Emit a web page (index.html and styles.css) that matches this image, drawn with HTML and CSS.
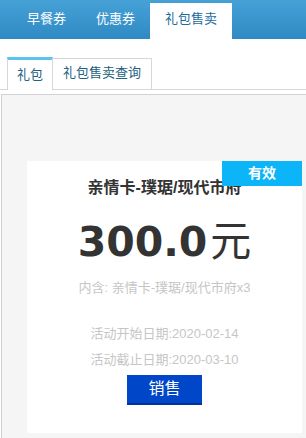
FILE: index.html
```html
<!DOCTYPE html>
<html lang="zh-CN">
<head>
<meta charset="utf-8">
<title>礼包售卖</title>
<link rel="stylesheet" href="styles.css">
</head>
<body>
<div class="topbar">
  <div class="toptab">早餐券</div>
  <div class="toptab">优惠券</div>
  <div class="toptab active">礼包售卖</div>
</div>
<div class="subtabs">
  <div class="subtab active">礼包</div>
  <div class="subtab">礼包售卖查询</div>
</div>
<div class="panel">
  <div class="card">
    <div class="badge">有效</div>
    <div class="title">亲情卡-璞琚/现代市府</div>
    <div class="price"><span class="num">300.0</span><span class="unit">元</span></div>
    <div class="contains">内含: 亲情卡-璞琚/现代市府x3</div>
    <div class="date first">活动开始日期:2020-02-14</div>
    <div class="date">活动截止日期:2020-03-10</div>
    <div class="btn">销售</div>
  </div>
</div>
</body>
</html>
```
FILE: styles.css
```css
* { box-sizing: border-box; }
html, body { margin: 0; padding: 0; }
body {
  width: 306px;
  height: 438px;
  overflow: hidden;
  background: #fff;
  font-family: "Liberation Sans", "Noto Sans CJK SC", sans-serif;
  font-size: 13px;
}
.topbar {
  height: 39px;
  display: flex;
  align-items: flex-end;
  padding-left: 12px;
  background: linear-gradient(#46a1d6, #2f8ac4);
}
.toptab {
  height: 36px;
  line-height: 32px;
  padding: 0 15px;
  color: #fff;
  font-size: 13px;
}
.toptab.active {
  background: #fff;
  color: #1b6b9c;
  padding: 0 15px;
}
.subtabs {
  margin-top: 18px;
  height: 33px;
  display: flex;
  align-items: flex-end;
  padding-left: 7px;
  border-bottom: 1px solid #d3d9dc;
}
.subtab {
  height: 31px;
  line-height: 28px;
  padding: 0 10px;
  border: 1px solid #d3d9dc;
  border-bottom: none;
  color: #235f80;
  background: #fff;
  font-size: 13px;
}
.subtab.active {
  height: 33px;
  margin-bottom: -1px;
  padding: 0 9px;
  border-top: 3px solid #5cc3ee;
  color: #235f80;
  line-height: 29px;
}
.subtab + .subtab { margin-left: -1px; }
.panel {
  margin-top: 4px;
  margin-left: 1px;
  border-top: 1px solid #d2d2d2;
  border-left: 1px solid #d2d2d2;
  background: #f5f5f5;
  padding: 66px 4px 7px 25px;
}
.card {
  position: relative;
  width: 275px;
  background: #fff;
  padding: 17px 0 28px;
  display: flex;
  flex-direction: column;
  align-items: center;
}
.badge {
  position: absolute;
  top: 0;
  right: 0;
  width: 80px;
  height: 25px;
  line-height: 24px;
  text-align: center;
  background: #0bb5f7;
  color: #fff;
  font-weight: bold;
  font-size: 14px;
}
.title {
  font-size: 16px;
  line-height: 20px;
  font-weight: bold;
  color: #333;
}
.price {
  margin-top: 16px;
  font-family: "DejaVu Sans", sans-serif;
  font-size: 41px;
  line-height: 48px;
  color: #333;
}
.num { font-weight: bold; }
.unit {
  font-family: "Noto Sans CJK SC", sans-serif;
  font-weight: normal;
  margin-left: 3px;
}
.contains {
  margin-top: 13px;
  line-height: 18px;
  color: #c6c6c6;
}
.date {
  margin-top: 8px;
  line-height: 18px;
  color: #c6c6c6;
}
.date.first { margin-top: 28px; }
.btn {
  margin-top: 6px;
  width: 75px;
  height: 30px;
  line-height: 28px;
  text-align: center;
  background: #0046c9;
  border-bottom: 2px solid #00349a;
  color: #fff;
  font-size: 16px;
}
```
